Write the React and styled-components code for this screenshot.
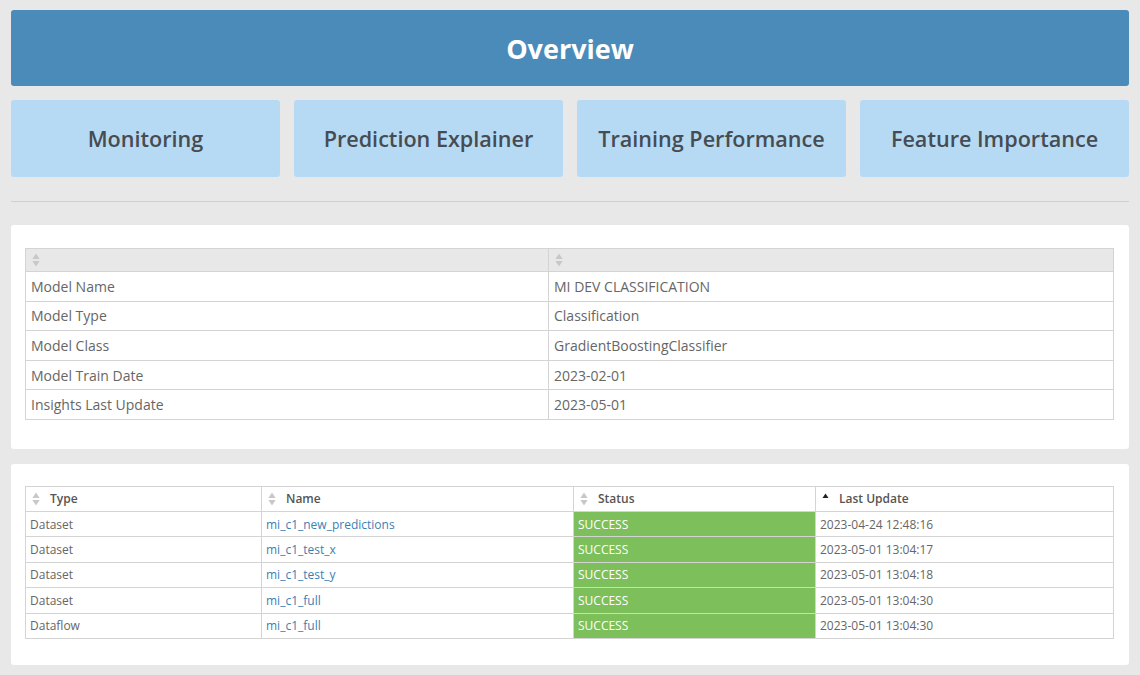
import React from "react";
import styled, { createGlobalStyle } from "styled-components";

const GlobalStyle = createGlobalStyle`
  html, body {
    margin: 0;
    padding: 0;
    background: #e8e8e8;
    font-family: "Open Sans", "Liberation Sans", sans-serif;
  }
`;

const Page = styled.div`
  padding: 10px 11px 10px 11px;
  display: flex;
  flex-direction: column;
`;

const TitleBar = styled.div`
  height: 76px;
  background: #4b8bba;
  border-radius: 3px;
  display: flex;
  align-items: center;
  justify-content: center;
  color: #fff;
  font-size: 27px;
  font-weight: 700;
`;

const NavRow = styled.div`
  display: grid;
  grid-template-columns: repeat(4, 1fr);
  gap: 14px;
  margin-top: 14px;
`;

const NavTile = styled.div`
  height: 77px;
  background: #b7daf4;
  border-radius: 3px;
  display: flex;
  align-items: center;
  justify-content: center;
  color: #464c52;
  font-size: 21.6px;
  font-weight: 600;
`;

const Divider = styled.hr`
  border: none;
  border-top: 1px solid #cfcfcf;
  margin: 24px 0 23px;
`;

const Panel = styled.div`
  background: #fff;
  border-radius: 3px;
  padding: ${(p) => p.$pad};
  margin-bottom: ${(p) => p.$mb || "0"};
`;

const Table = styled.table`
  width: 100%;
  border-collapse: collapse;
  border: 1px solid #d4d4d4;
  table-layout: fixed;
`;

const HeadCell = styled.th`
  text-align: left;
  font-weight: ${(p) => (p.$bold ? 600 : 400)};
  font-size: 12px;
  color: #555;
  height: ${(p) => p.$h};
  padding: 0 0 0 6px;
  background: ${(p) => p.$bg || "#fff"};
  border: 1px solid #d4d4d4;
  vertical-align: middle;
`;

const HeadInner = styled.span`
  display: flex;
  align-items: center;
  gap: 10px;
`;

const InfoCell = styled.td`
  font-size: 14px;
  color: #666;
  height: 28.6px;
  padding: 0 0 0 5px;
  border: 1px solid #d4d4d4;
`;

const JobCell = styled.td`
  font-size: 12px;
  color: ${(p) => p.$color || "#666"};
  background: ${(p) => p.$bg || "#fff"};
  height: 24.4px;
  padding: 0 0 0 4px;
  border: 1px solid #d4d4d4;
`;

const SortIcon = ({ active }) =>
  active ? (
    <svg width="7" height="13" viewBox="0 0 7 13">
      <path d="M3.5 1.5 L6.5 6 L0.5 6 Z" fill="#222" />
    </svg>
  ) : (
    <svg width="8" height="14" viewBox="0 0 8 14">
      <path d="M4 0.5 L7.6 6 L0.4 6 Z" fill="#c8c8c8" />
      <path d="M4 13.5 L7.6 8 L0.4 8 Z" fill="#c8c8c8" />
    </svg>
  );

const navItems = [
  "Monitoring",
  "Prediction Explainer",
  "Training Performance",
  "Feature Importance",
];

const info = [
  ["Model Name", "MI DEV CLASSIFICATION"],
  ["Model Type", "Classification"],
  ["Model Class", "GradientBoostingClassifier"],
  ["Model Train Date", "2023-02-01"],
  ["Insights Last Update", "2023-05-01"],
];

const jobs = [
  ["Dataset", "mi_c1_new_predictions", "SUCCESS", "2023-04-24 12:48:16"],
  ["Dataset", "mi_c1_test_x", "SUCCESS", "2023-05-01 13:04:17"],
  ["Dataset", "mi_c1_test_y", "SUCCESS", "2023-05-01 13:04:18"],
  ["Dataset", "mi_c1_full", "SUCCESS", "2023-05-01 13:04:30"],
  ["Dataflow", "mi_c1_full", "SUCCESS", "2023-05-01 13:04:30"],
];

const jobCols = [
  { label: "Type", width: "236px" },
  { label: "Name", width: "312px" },
  { label: "Status", width: "242px" },
  { label: "Last Update", active: true },
];

export default function App() {
  return (
    <>
      <GlobalStyle />
      <Page>
        <TitleBar>Overview</TitleBar>
        <NavRow>
          {navItems.map((n) => (
            <NavTile key={n}>{n}</NavTile>
          ))}
        </NavRow>
        <Divider />
        <Panel $pad="23px 15px 29px 14px" $mb="15px">
          <Table>
            <colgroup>
              <col style={{ width: "523px" }} />
              <col />
            </colgroup>
            <thead>
              <tr>
                <HeadCell $h="22px" $bg="#e8e8e8">
                  <HeadInner>
                    <SortIcon />
                  </HeadInner>
                </HeadCell>
                <HeadCell $h="22px" $bg="#e8e8e8">
                  <HeadInner>
                    <SortIcon />
                  </HeadInner>
                </HeadCell>
              </tr>
            </thead>
            <tbody>
              {info.map(([k, v]) => (
                <tr key={k}>
                  <InfoCell>{k}</InfoCell>
                  <InfoCell>{v}</InfoCell>
                </tr>
              ))}
            </tbody>
          </Table>
        </Panel>
        <Panel $pad="22px 15px 26px 14px">
          <Table>
            <colgroup>
              {jobCols.map((c) => (
                <col key={c.label} style={c.width ? { width: c.width } : undefined} />
              ))}
            </colgroup>
            <thead>
              <tr>
                {jobCols.map((c) => (
                  <HeadCell key={c.label} $h="24px" $bold>
                    <HeadInner>
                      <SortIcon active={c.active} />
                      {c.label}
                    </HeadInner>
                  </HeadCell>
                ))}
              </tr>
            </thead>
            <tbody>
              {jobs.map((j, i) => (
                <tr key={i}>
                  <JobCell>{j[0]}</JobCell>
                  <JobCell $color="#3b7fb3">{j[1]}</JobCell>
                  <JobCell $color="#fff" $bg="#7dc05b">
                    {j[2]}
                  </JobCell>
                  <JobCell>{j[3]}</JobCell>
                </tr>
              ))}
            </tbody>
          </Table>
        </Panel>
      </Page>
    </>
  );
}
